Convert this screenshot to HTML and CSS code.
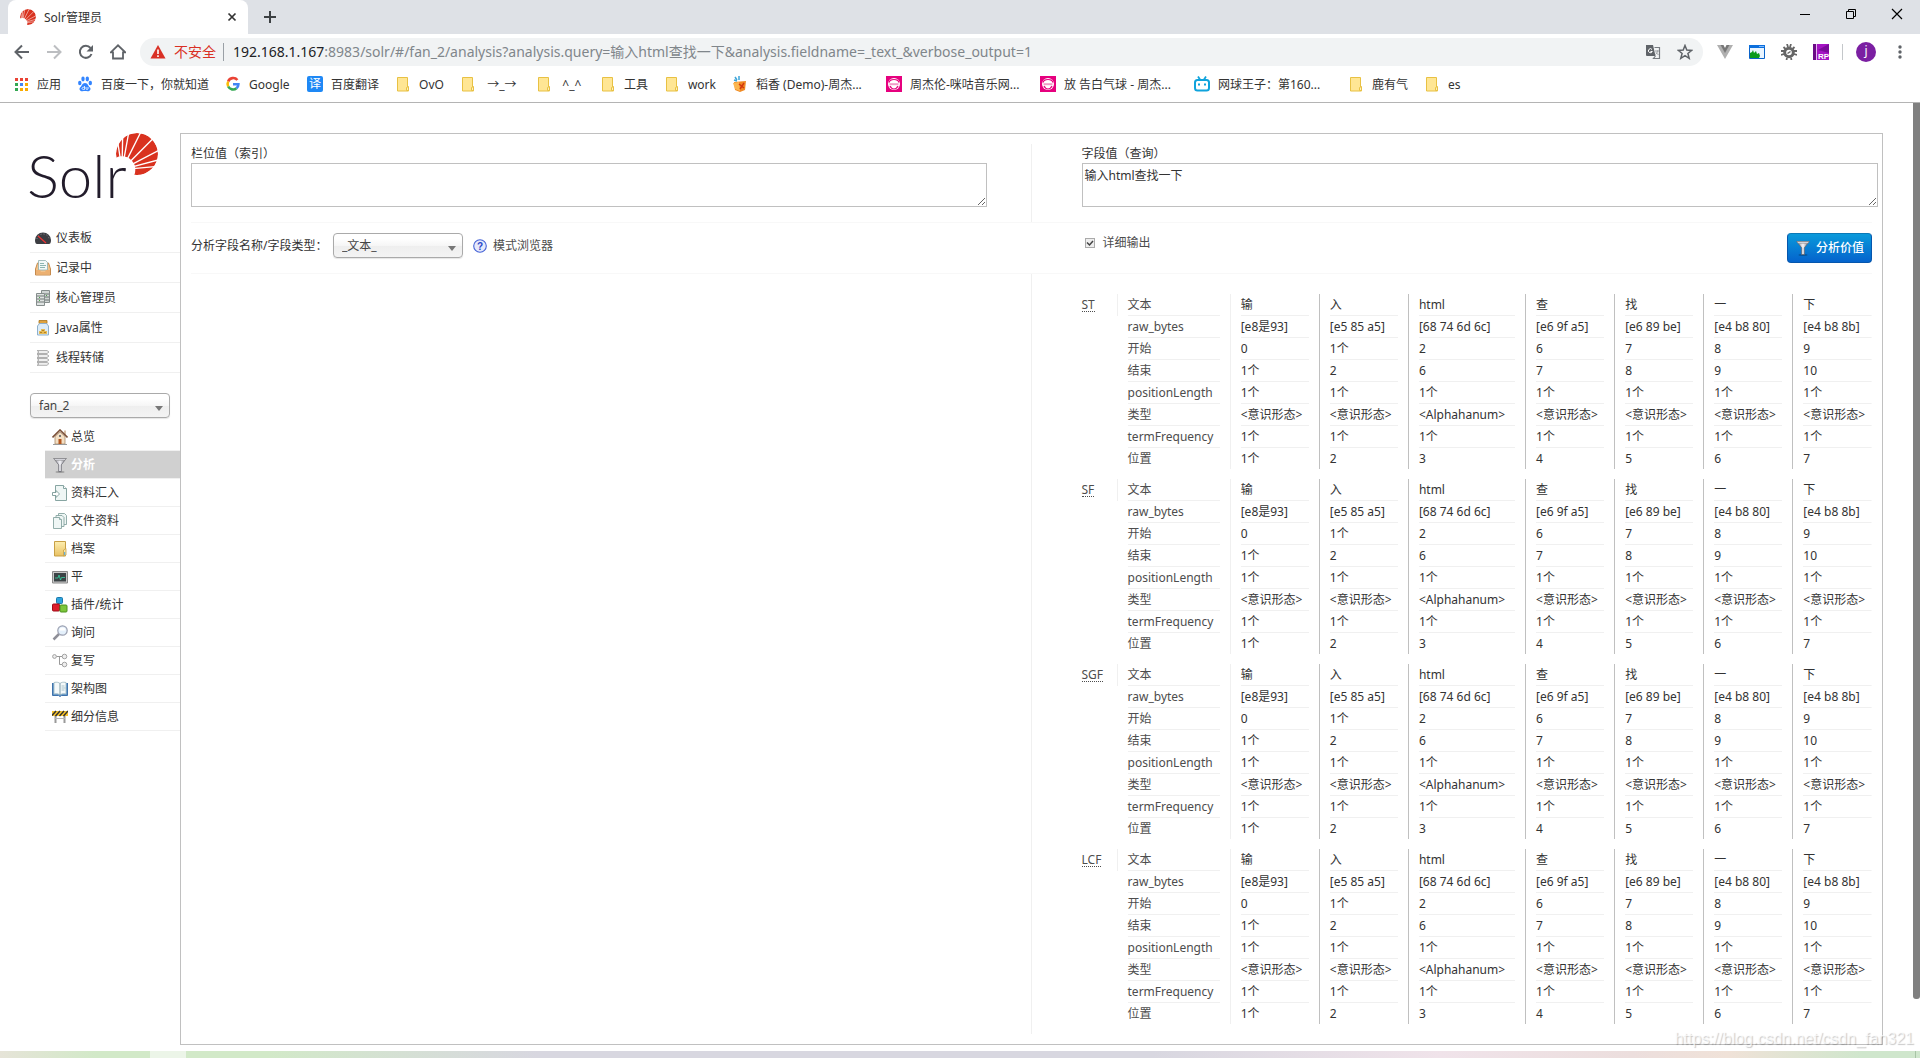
FILE: index.html
```html
<!DOCTYPE html>
<html lang="zh-CN">
<head>
<meta charset="utf-8">
<title>Solr管理员</title>
<link rel="stylesheet" href="styles.css">
</head>
<body>
<svg class="sprite" aria-hidden="true">
  <defs>
    <linearGradient id="g-folder" x1="0" y1="0" x2="0" y2="1"><stop offset="0" stop-color="#fdeeb0"/><stop offset="1" stop-color="#e9c163"/></linearGradient>
    <linearGradient id="g-metal"><stop offset="0" stop-color="#8a8a94"/><stop offset=".5" stop-color="#f4f4f8"/><stop offset="1" stop-color="#777780"/></linearGradient>
    <mask id="sun-mask">
      <circle cx="63" cy="63" r="63" fill="#fff"/>
      <circle cx="18" cy="110" r="40" fill="#000"/>
      <path d="M18 110L4 20M18 110L20 8M18 110L38 0M18 110L75 -4M18 110L112 16M18 110L128 52M18 110L130 80M18 110L125 100" stroke="#000" stroke-width="4"/>
    </mask>
    <symbol id="i-sun" viewBox="0 0 126 126"><circle cx="63" cy="63" r="63" fill="#d9321f" mask="url(#sun-mask)"/></symbol>
    <symbol id="i-bmfolder" viewBox="0 0 16 16"><path d="M2.500 1.500h10v10.500h1v3h-11z" fill="#ffe694" stroke="#e8c143"/><path d="M11.500 14.500v-3l2-1v4z" fill="#fff0b8" stroke="#e8c143"/></symbol>
    <symbol id="i-migu" viewBox="0 0 16 16"><path d="M0 0h16v16H0z" fill="#e6007e"/><circle cx="8" cy="8" r="6" fill="#fff"/><path d="M3 6.500c1-4 9-4 10 0M4 10c2 4 6 4 8 0" fill="none" stroke="#e6007e" stroke-width="1.200"/><path d="M3.500 7.200h9v2h-9z" fill="#f29ac8"/></symbol>
    <symbol id="i-funnel" viewBox="0 0 16 16"><ellipse cx="8" cy="15" rx="4.500" ry=".9" fill="#000" opacity=".25"/><path d="M1.800 1.500h12.400L9.300 7.800v6.700H6.700V7.800z" fill="url(#g-metal)" stroke="#67676f" stroke-width=".8"/><path d="M1.800 1.500h12.400l-1.200 1.800H3z" fill="#dedee6" stroke="#777" stroke-width=".5"/></symbol>
  </defs>
</svg>

<header class="browser">
  <div class="tabs">
    <div class="tab">
      <svg class="i16" viewBox="0 0 16 16"><use href="#i-sun"/></svg>
      <span class="tab-title">Solr管理员</span>
      <button class="bare" aria-label="关闭标签页"><svg class="i16" viewBox="0 0 16 16"><path d="M4.500 4.500l7 7M11.500 4.500l-7 7" stroke="#333" stroke-width="1.700"/></svg></button>
    </div>
    <button class="bare newtab" aria-label="新标签页"><svg class="i16" viewBox="0 0 16 16"><path d="M8 2v12M2 8h12" stroke="#3c4043" stroke-width="2"/></svg></button>
    <div class="window-buttons">
      <button class="bare" aria-label="最小化"><svg class="i16" viewBox="0 0 16 16"><path d="M3 8.500h10" stroke="#000"/></svg></button>
      <button class="bare" aria-label="还原"><svg class="i16" viewBox="0 0 16 16"><path d="M3.500 5.500h7v7h-7zM5.500 5.500v-2h7v7h-2" fill="none" stroke="#000"/></svg></button>
      <button class="bare" aria-label="关闭"><svg class="i16" viewBox="0 0 16 16"><path d="M3 3l10 10M13 3L3 13" stroke="#000" stroke-width="1.200"/></svg></button>
    </div>
  </div>
  <div class="toolbar">
    <div class="nav-buttons">
      <button class="bare" aria-label="后退"><svg class="i16" viewBox="0 0 16 16"><path d="M15 8H2M8 1.500L1.500 8 8 14.500" fill="none" stroke="#5f6368" stroke-width="2"/></svg></button>
      <button class="bare" aria-label="前进"><svg class="i16" viewBox="0 0 16 16"><path d="M1 8h13M8 1.500L14.500 8 8 14.500" fill="none" stroke="#bcbec1" stroke-width="2"/></svg></button>
      <button class="bare" aria-label="重新加载"><svg class="i16" viewBox="0 0 16 16"><path d="M13.500 10A6 6 0 1 1 12.500 4" fill="none" stroke="#5f6368" stroke-width="2"/><path d="M15 1v6.500H8.500z" fill="#5f6368"/></svg></button>
      <button class="bare" aria-label="主页"><svg class="i16" viewBox="0 0 16 16"><path d="M0.800 8.300L8 1.300l7.200 7H13v6.200H3V8.300z" fill="none" stroke="#5f6368" stroke-width="1.800"/></svg></button>
    </div>
    <div class="omnibox">
      <svg class="i16" viewBox="0 0 16 16"><path d="M8 1l7.500 13.500H.5z" fill="#d93025"/><path d="M8 5.500v4.500M8 11.300v1.700" stroke="#fff" stroke-width="1.600"/></svg>
      <span class="insecure">不安全</span>
      <span class="url"><b>192.168.1.167</b>:8983/solr/#/fan_2/analysis?analysis.query=输入html查找一下&amp;analysis.fieldname=_text_&amp;verbose_output=1</span>
      <svg class="i16" viewBox="0 0 16 16"><path d="M1 1h7l2.500 11H2a1 1 0 0 1-1-1z" fill="#5f6368"/><path d="M9.500 3.500h5v11h-6l2-2.500" fill="none" stroke="#777b80" stroke-width="1.200"/><path d="M10 7h4M12.500 6.500c0 2-1 3-2 4M11 8.500l2.500 2.500" fill="none" stroke="#9a9da1"/><path d="M7 5.500a2 2 0 1 0 .3 2H5.500" fill="none" stroke="#fff"/></svg>
      <svg class="i16" viewBox="0 0 16 16"><path d="M8 1.500l1.800 4.600 4.900.3-3.800 3.100 1.300 4.800L8 11.600l-4.200 2.700 1.300-4.800L1.300 6.400l4.900-.3z" fill="none" stroke="#5f6368" stroke-width="1.500"/></svg>
    </div>
    <div class="extensions">
      <svg class="i16" viewBox="0 0 16 16"><path d="M0 1h4l4 7 4-7h4L8 15z" fill="#b0b0b0"/><path d="M3.500 1H6.500L8 4l1.500-3h3L8 9z" fill="#777"/></svg>
      <svg class="i16" viewBox="0 0 16 16"><path d="M.5 1.500h15v13H.5z" fill="#eaf5ff" stroke="#0a63c8"/><path d="M0 1h16v3H0z" fill="#0c6fdc"/><path d="M10 2h5v1h-5z" fill="#7cb8ff"/><path d="M1 14V9l2-1 1-2 1 3 2-2 1 3 2-1 1 3-1 2z" fill="#0a9a1c"/></svg>
      <svg class="i16" viewBox="0 0 16 16"><circle cx="8" cy="8.500" r="4.300" fill="none" stroke="#666" stroke-width="3"/><path d="M6 0l1 3M10 0L9 3M6 14l-.5 2M10 14l.5 2M0 7h3M0 11l3-1M13 7h3M13 10l3 1M2.500 3l2 2M13.500 3l-2 2" stroke="#666" stroke-width="1.800"/><path d="M6.500 9.500l3-2" stroke="#666" stroke-width="1.500"/></svg>
      <svg class="i16" viewBox="0 0 16 16"><path d="M0 0h16v16H0z" fill="#a514c4"/><path d="M0 0h3v16H0z" fill="#6b0c86"/><path d="M3 0h1v16H3z" fill="#e7b8f2"/><path d="M5 6l11-6v9z" fill="#7c0a9b"/><text x="5" y="15" class="rp">RP</text></svg>
      <i class="sep"></i>
      <span class="avatar">j</span>
      <svg class="i16" viewBox="0 0 16 16"><circle cx="8" cy="3" r="1.700" fill="#5f6368"/><circle cx="8" cy="8" r="1.700" fill="#5f6368"/><circle cx="8" cy="13" r="1.700" fill="#5f6368"/></svg>
    </div>
  </div>
  <nav class="bookmarks" aria-label="书签">
    <a href="#"><svg class="i16" viewBox="0 0 16 16"><path d="M2 2h3v3H2zM7 2h3v3H7z" fill="#ea4335"/><path d="M12 2h3v3h-3z" fill="#ea4335"/><path d="M2 7h3v3H2z" fill="#34a853"/><path d="M7 7h3v3H7z" fill="#4285f4"/><path d="M12 7h3v3h-3zM7 12h3v3H7zM12 12h3v3h-3z" fill="#f9ab00"/><path d="M2 12h3v3H2z" fill="#34a853"/></svg><span>应用</span></a>
    <a href="#"><svg class="i16" viewBox="0 0 16 16"><g fill="#3385ff"><ellipse cx="2.800" cy="7" rx="1.700" ry="2.200"/><ellipse cx="6" cy="3" rx="1.700" ry="2.400"/><ellipse cx="10.300" cy="3" rx="1.700" ry="2.400"/><ellipse cx="13.300" cy="7" rx="1.700" ry="2.200"/><path d="M8 7c3 0 3 3 5 4.500 1.500 2-.5 4-2.500 3.700-1.700-.3-3.300-.3-5 0-2 .3-4-1.700-2.500-3.700C5 10 5 7 8 7z"/></g><path d="M7.500 10v3.500h-1c-2 0-2-2.200 0-2.200h1M9 11v2c0 .5 2 .5 2 0v-2" fill="none" stroke="#fff" stroke-width=".8"/></svg><span>百度一下，你就知道</span></a>
    <a href="#"><svg class="i16" viewBox="0 0 16 16"><g fill="none" stroke-width="2.600"><path d="M12.400 4A5.400 5.400 0 0 0 3.200 5.500" stroke="#ea4335"/><path d="M3.200 5.500a5.400 5.400 0 0 0 0 5" stroke="#fbbc05"/><path d="M3.200 10.500a5.400 5.400 0 0 0 8.300 1.700" stroke="#34a853"/><path d="M11.500 12.200c1.300-1.100 1.900-2.500 1.900-4H8" stroke="#4285f4"/></g></svg><span class="google">Google</span></a>
    <a href="#"><i class="yi">译</i><span>百度翻译</span></a>
    <a href="#"><svg class="i16"><use href="#i-bmfolder"/></svg><span>OvO</span></a>
    <a href="#"><svg class="i16"><use href="#i-bmfolder"/></svg><span class="arrows">→_→</span></a>
    <a href="#"><svg class="i16"><use href="#i-bmfolder"/></svg><span class="face">^_^</span></a>
    <a href="#"><svg class="i16"><use href="#i-bmfolder"/></svg><span>工具</span></a>
    <a href="#"><svg class="i16"><use href="#i-bmfolder"/></svg><span>work</span></a>
    <a href="#"><svg class="i16" viewBox="0 0 16 16"><path d="M2 6l12-1-1 9-5 2-5-2z" fill="#f08a24"/><path d="M1 7l6-1 1 9-5-2z" fill="#fbb651"/><path d="M7 8l5 4M12 7l-4 6" stroke="#d4380d" stroke-width="1.500"/><path d="M3 1l2 3M7 0v4M2 4l3 1" stroke="#3da5d9" stroke-width="1.500"/></svg><span class="long">稻香 (Demo)-周杰...</span></a>
    <a href="#"><svg class="i16"><use href="#i-migu"/></svg><span class="long">周杰伦-咪咕音乐网...</span></a>
    <a href="#"><svg class="i16"><use href="#i-migu"/></svg><span class="long">放 告白气球 - 周杰...</span></a>
    <a href="#"><svg class="i16" viewBox="0 0 16 16"><path d="M4 .5L6 3.500M12 .5l-2 3" stroke="#0fa3dc" stroke-width="1.800"/><rect x="1" y="4" width="14" height="10.500" rx="2.500" fill="none" stroke="#0fa3dc" stroke-width="2"/><path d="M5 7.500v2M11 7.500v2" stroke="#0fa3dc" stroke-width="2"/></svg><span class="long">网球王子：第160...</span></a>
    <a href="#"><svg class="i16"><use href="#i-bmfolder"/></svg><span>鹿有气</span></a>
    <a href="#"><svg class="i16"><use href="#i-bmfolder"/></svg><span>es</span></a>
  </nav>
</header>

<div class="page">
  <aside class="sidebar">
    <a class="logo" href="#" aria-label="Solr"><span>Solr</span><svg class="sun" viewBox="0 0 126 126"><use href="#i-sun"/></svg></a>
    <nav class="menu" aria-label="主菜单">
      <a href="#"><svg class="i16" viewBox="0 0 16 16"><path d="M0 10a8 7.500 0 0 1 16 0c0 3-1 4-2 4H2c-1 0-2-1-2-4z" fill="#3c3d42"/><path d="M2 9a6 5 0 0 1 12 0" fill="none" stroke="#8c8d92" stroke-dasharray="1 2"/><path d="M3 6l8 7" stroke="#e33" stroke-width="1.200"/></svg>仪表板</a>
      <a href="#"><svg class="i16" viewBox="0 0 16 16"><path d="M2.500 3L0.500 9v6h15V9l-2-6z" fill="#f3c48c" stroke="#c68a4c"/><path d="M3.500.5h7l2 2V10h-9z" fill="#f2f8f8" stroke="#8fb0b0" stroke-width=".8"/><path d="M5 3.500h4M5 5.500h6M5 7.500h5" stroke="#8bb5b0"/><path d="M1 10h4l1 2h4l1-2h4v4.500H1z" fill="#ecb071"/></svg>记录中</a>
      <a href="#"><svg class="i16" viewBox="0 0 16 16"><path d="M6.500.5h8v12h-8z" fill="#d0d5d4" stroke="#858d8c"/><path d="M1.500 3.500h8v12h-8z" fill="#dfe3e2" stroke="#858d8c"/><path d="M2 6h7M2 9h7M2 12h7M10 4h4M10 7h4M10 10h4" stroke="#6e7675"/><path d="M4 7.500h1M4 10.500h1M11 5.500h1" stroke="#4aa54a"/></svg>核心管理员</a>
      <a href="#"><svg class="i16" viewBox="0 0 16 16"><path d="M4 .5h8v3H4z" fill="#e0a33e" stroke="#a8731d" stroke-width=".8"/><path d="M4.500 3.500h7l2 2.500v9h-11V6z" fill="#dcecf8" stroke="#8eb0cc"/><path d="M4 14v-3h2V9h4v2h2v3z" fill="#e7bb55"/><path d="M5 12.500h2M9 12.500h2M7 10.500h2" stroke="#b58325"/></svg>Java属性</a>
      <a href="#"><svg class="i16" viewBox="0 0 16 16"><g fill="#efefef" stroke="#a8a8a8" stroke-width=".9"><path d="M2 .5h10l2 1.500-2 1.500H2L4 2z"/><path d="M2 4.500h10L14 6l-2 1.500H2L4 6z"/><path d="M2 8.500h10l2 1.500-2 1.500H2L4 10z"/><path d="M2 12.500h10l2 1-2 1.800H2l2-1.300z"/></g></svg>线程转储</a>
    </nav>
    <select class="chosen" aria-label="核心选择"><option>fan_2</option></select>
    <nav class="submenu" aria-label="核心菜单">
      <a href="#"><svg class="i16" viewBox="0 0 16 16"><path d="M3 7.500L8 3l5 4.500V15H3z" fill="#f3dfc4" stroke="#a98a6a" stroke-width=".8"/><path d="M12 1.500h2V6l-2-1.500z" fill="#d8c0a8"/><path d="M.5 8.500L8 1l7.500 7.500" fill="none" stroke="#7b5038" stroke-width="1.600"/><path d="M6.500 10h3v5h-3z" fill="#b5561e"/><path d="M7 6h2v2H7z" fill="#777"/><path d="M1 15.500h14" stroke="#9a9a9a"/></svg>总览</a>
      <a href="#" class="active"><svg class="i16"><use href="#i-funnel"/></svg>分析</a>
      <a href="#"><svg class="i16" viewBox="0 0 16 16"><path d="M3.500.5h8l3 3v12h-11z" fill="#eff6f5" stroke="#87a5a2"/><path d="M11.500.5v3h3" fill="#fff" stroke="#87a5a2"/><path d="M.5 7.500h3.500V5.500L7.500 9 4 12.500v-2H.5z" fill="#fff" stroke="#7b9a97" stroke-width=".9"/></svg>资料汇入</a>
      <a href="#"><svg class="i16" viewBox="0 0 16 16"><g fill="#eff6f5" stroke="#87a5a2" stroke-width=".9"><path d="M6.500.5h6l2 2v9h-8z"/><path d="M4 2.500h6l2 2v9H4z"/><path d="M1.500 4.500h6l2 2v9h-8z"/><path d="M7.500 4.500v2h2"/></g></svg>文件资料</a>
      <a href="#"><svg class="i16" viewBox="0 0 16 16"><path d="M2.500.5h11v14.500h-11z" fill="url(#g-folder)" stroke="#c79f45"/><path d="M11.500 15V9l2.500-1.500V14z" fill="#f9e6a5" stroke="#c79f45" stroke-width=".8"/><path d="M12.700 11v3" stroke="#4aa3e0"/></svg>档案</a>
      <a href="#"><svg class="i16" viewBox="0 0 16 16"><path d="M.5 2.500h15v11.500H.5z" fill="#c9c9c9" stroke="#8a8a8a"/><path d="M2 4h12v8.500H2z" fill="#3c4346"/><path d="M3 9h3l1-3 1.500 5 1-2.500H13" fill="none" stroke="#35d0a0" stroke-width=".8"/></svg>平</a>
      <a href="#"><svg class="i16" viewBox="0 0 16 16"><rect x="4.500" y=".5" width="6" height="6" rx="1" fill="#2fa3dc" stroke="#1b78ab"/><rect x=".5" y="7" width="7" height="7" rx="1" fill="#dc1d2c" stroke="#9e0f1b"/><rect x="8" y="8" width="7" height="7" rx="1" fill="#7cc63a" stroke="#4d9220"/></svg>插件/统计</a>
      <a href="#"><svg class="i16" viewBox="0 0 16 16"><path d="M1.500 14.500L7 9" stroke="#8f8f98" stroke-width="2.500"/><circle cx="10.500" cy="5.500" r="4.700" fill="#e4f0fb" stroke="#9a9fb0" stroke-width="1.200"/><path d="M7.500 5.500a3 3 0 0 1 6 0z" fill="#fff"/></svg>询问</a>
      <a href="#"><svg class="i16" viewBox="0 0 16 16"><path d="M4.500 3.500h6M7.500 3.500v8h3" fill="none" stroke="#999"/><g fill="#eee" stroke="#999" stroke-width=".9"><circle cx="2.500" cy="3.500" r="1.900"/><circle cx="12.500" cy="3.500" r="2.300"/><circle cx="12.500" cy="11.500" r="2.300"/></g></svg>复写</a>
      <a href="#"><svg class="i16" viewBox="0 0 16 16"><path d="M.5 2v12.500h6l1.500 1 1.500-1h6V2" fill="#5f93c9" stroke="#3f73ac"/><path d="M2 1.500c3-.8 5 0 6 1 1-1 3-1.800 6-1V13c-3-.5-5 0-6 1-1-1-3-1.500-6-1z" fill="#f4f9fa" stroke="#9db7c0" stroke-width=".8"/><path d="M8 2.500V14" stroke="#7d9aa5"/><path d="M9.500 5h3M9.500 7h4M9.500 9h3" stroke="#a9c3cb"/></svg>架构图</a>
      <a href="#"><svg class="i16" viewBox="0 0 16 16"><path d="M3.500 6v8M12.500 6v8" stroke="#9a9a9a" stroke-width="2"/><path d="M3 9.500h10" stroke="#b5b5b5"/><path d="M0 2h16v5H0z" fill="#f8c42c"/><path d="M0 6.500L4 2M3.500 7L8 2M7.500 7L12 2M11.500 7L16 2" stroke="#333" stroke-width="1.500"/></svg>细分信息</a>
    </nav>
  </aside>

  <main class="frame">
    <form class="analysis">
      <div class="half index">
        <label for="index-value">栏位值（索引）</label>
        <textarea id="index-value"></textarea>
      </div>
      <div class="half query">
        <label for="query-value">字段值（查询）</label>
        <textarea id="query-value">输入html查找一下</textarea>
      </div>
      <div class="options">
        <div class="field">
          <label for="field-type">分析字段名称/字段类型：</label>
          <select class="chosen" id="field-type"><option>_文本_</option></select>
          <a class="schema" href="#"><svg class="i14" viewBox="0 0 14 14"><circle cx="7" cy="7" r="6.300" fill="#e6e9fb" stroke="#4563d6" stroke-width="1.100"/><text x="7" y="11" class="qmark">?</text></svg>模式浏览器</a>
        </div>
        <div class="verbose">
          <label><input type="checkbox" checked>详细输出</label>
          <button type="submit" class="analyse"><svg class="i16"><use href="#i-funnel"/></svg>分析价值</button>
        </div>
      </div>
    </form>
    <div class="results">
      <div class="half index"></div>
      <div class="half query" id="result"></div>
    </div>
  </main>
  <div class="scrollbar"><i></i></div>
</div>

<footer class="taskbar">
  <i class="tip black"></i><i class="tip black"></i><i class="tip grey"></i><i class="tip blue"></i><i class="current"></i><i class="tip cyan"></i><i class="tip red"></i><i class="tip blue"></i>
  <span class="tray"><i class="tip black"></i><i class="tip red"></i><i class="tip gap"></i><i class="tip black"></i><i class="tip gap"></i><i class="tip black"></i></span>
</footer>
<div class="watermark">https://blog.csdn.net/csdn_fan321</div>
<script src="app.js"></script>
</body>
</html>
```
FILE: app.js
```js
// Analysis stages and the attributes of every token they emit.
const stages = ['ST', 'SF', 'SGF', 'LCF'];
const rows = [
  ['文本', '输', '入', 'html', '查', '找', '一', '下'],
  ['raw_bytes', '[e8是93]', '[e5 85 a5]', '[68 74 6d 6c]', '[e6 9f a5]', '[e6 89 be]', '[e4 b8 80]', '[e4 b8 8b]'],
  ['开始', '0', '1个', '2', '6', '7', '8', '9'],
  ['结束', '1个', '2', '6', '7', '8', '9', '10'],
  ['positionLength', '1个', '1个', '1个', '1个', '1个', '1个', '1个'],
  ['类型', '<意识形态>', '<意识形态>', '<Alphahanum>', '<意识形态>', '<意识形态>', '<意识形态>', '<意识形态>'],
  ['termFrequency', '1个', '1个', '1个', '1个', '1个', '1个', '1个'],
  ['位置', '1个', '2', '3', '4', '5', '6', '7']
];

function add(parent, tag, text) {
  const node = document.createElement(tag);
  if (text !== undefined) node.textContent = text;
  parent.appendChild(node);
  return node;
}

const result = document.getElementById('result');
for (const stage of stages) {
  const table = add(result, 'table');
  table.className = 'stage';
  const body = add(table, 'tbody');
  rows.forEach((cells, index) => {
    const tr = add(body, 'tr');
    const head = add(tr, 'td');
    head.className = 'name';
    if (index === 0) add(head, 'abbr', stage);
    cells.forEach((cell, column) => {
      const node = add(tr, column === 0 ? 'th' : 'td', cell);
      if (column === 3) node.className = 'wide';
    });
  });
}
```
FILE: styles.css
```css
* { box-sizing: border-box; }
body {
  margin: 0;
  min-height: 100vh;
  display: flex;
  flex-direction: column;
  background: #fff;
  color: #333;
  font: 12px/18px "Noto Sans", "Noto Sans CJK SC", sans-serif;
}
a { color: inherit; text-decoration: none; }
button, select, textarea, input { font: inherit; color: inherit; margin: 0; }
.sprite { position: absolute; width: 0; height: 0; }
.i16 { width: 16px; height: 16px; flex: none; display: block; }
.i14 { width: 14px; height: 14px; flex: none; display: block; }
.bare { border: 0; background: none; padding: 0; }

/* browser window */
.browser { border-bottom: 1px solid #b4b4b4; }
.tabs { display: flex; height: 34px; background: #dee1e6; padding-left: 8px; }
.tab {
  display: flex; align-items: center; width: 240px; height: 34px;
  padding: 0 8px 0 12px; gap: 8px; background: #fff; border-radius: 8px 8px 0 0;
}
.tab-title { flex: 1; padding-top: 2px; }
.newtab { margin-left: 14px; }
.window-buttons { display: flex; gap: 30px; margin-left: auto; padding-right: 15px; height: 28px; }
.toolbar { display: flex; align-items: center; height: 32px; padding: 4px 12px 0 14px; }
.nav-buttons { display: flex; gap: 16px; margin-right: 14px; }
.omnibox {
  flex: 1; display: flex; align-items: center; height: 28px; min-width: 0;
  padding: 0 10px; gap: 16px; border-radius: 14px; background: #f1f3f4;
}
.insecure {
  margin-left: -8px; color: #d93025; font-size: 14px; padding-right: 7px;
  border-right: 1px solid #9aa0a6;
}
.url { flex: 1; margin-left: -7px; font-size: 14px; color: #80868b; white-space: nowrap; }
.url b { font-weight: 400; color: #202124; }
.extensions { display: flex; align-items: center; gap: 16px; margin-left: 14px; }
.sep { width: 1px; height: 16px; background: #c4c7ca; margin: 0 -3px; }
.avatar { width: 20px; height: 20px; border-radius: 50%; background: #7b1fa2; color: #fff; text-align: center; line-height: 18px; }
.rp { font: bold 8px "Liberation Sans", sans-serif; fill: #fff; }
.bookmarks { display: flex; align-items: center; gap: 16px; height: 36px; padding-left: 13px; white-space: nowrap; }
.bookmarks a { display: flex; align-items: center; gap: 8px; }
.bookmarks span { padding-top: 2px; }
.google { width: 42px; }
.arrows { width: 36px; text-align: center; }
.face { width: 24px; text-align: center; }
.long { width: 114px; overflow: hidden; }
.yi { width: 16px; height: 16px; border-radius: 2px; background: #1e88f5; color: #fff; font-style: normal; text-align: center; line-height: 16px; }

/* admin page */
.page { flex: 1; display: flex; padding-left: 30px; }
.sidebar { width: 150px; flex: none; padding-top: 30px; }
.logo { display: flex; height: 64px; margin: 0 0 26px -3px; }
.logo span { width: 89px; white-space: nowrap; font: 300 60px/84px Lato, sans-serif; color: #221c2b; }
.sun { width: 42px; height: 42px; flex: none; }
.menu a, .submenu a { display: flex; align-items: center; border-bottom: 1px solid #f0f0f0; }
.menu a { height: 30px; padding-left: 5px; gap: 5px; }
.chosen {
  appearance: none; height: 25px; padding: 0 24px 0 8px; border: 1px solid #aaa; border-radius: 4px;
  background:
    url("data:image/svg+xml,%3Csvg xmlns='http://www.w3.org/2000/svg' width='8' height='5'%3E%3Cpath d='M0 0h8L4 5z' fill='%23777'/%3E%3C/svg%3E") no-repeat right 6px top 12px,
    linear-gradient(#fff 20%, #f6f6f6 50%, #eee 52%, #f4f4f4);
  box-shadow: 0 1px 1px rgba(0, 0, 0, .1);
  color: #444;
}
.sidebar .chosen { width: 140px; margin: 20px 0 5px; display: block; }
.submenu { margin-left: 15px; }
.submenu a { height: 28px; padding-left: 7px; gap: 3px; }
.submenu .active { background: #d0d0d0; color: #fff; font-weight: 700; }

.frame { flex: 1; min-width: 0; margin: 30px 30px 6px 0; border: 1px solid #c0c0c0; padding: 10px; }
.analysis, .results { display: grid; grid-template-columns: 1fr 1fr; }
.half.index { border-right: 1px solid #f0f0f0; padding-right: 50px; }
.half.query { padding-left: 50px; }
.analysis .half { height: 78px; }
.analysis .half label { display: block; height: 19px; line-height: 20px; }
textarea {
  display: block; width: calc(100% + 6px); height: 44px; padding: 4px 2px;
  border: 1px solid #c0c0c0; line-height: 16px; resize: vertical;
}
.options {
  grid-column: 1 / 3; display: grid; grid-template-columns: 1fr 1fr;
  border: solid #f8f8f8; border-width: 1px 0; height: 52px; padding-top: 10px;
}
.field, .schema { display: flex; align-items: center; height: 25px; }
#field-type { width: 130px; margin: 0 10px 0 4px; }
.field label { width: 138px; white-space: nowrap; }
.schema { gap: 6px; color: #4d4d4d; }
.qmark { font: bold 10px "Liberation Sans", sans-serif; fill: #2845c8; text-anchor: middle; }
.verbose { display: flex; justify-content: space-between; align-items: flex-start; padding-left: 50px; }
.verbose label { display: flex; align-items: center; gap: 8px; height: 20px; padding-left: 3px; color: #4d4d4d; }
.verbose input { appearance: none; width: 10px; height: 10px; border: 1px solid #aaa; background: #eee url("data:image/svg+xml,%3Csvg xmlns='http://www.w3.org/2000/svg' width='8' height='8'%3E%3Cpath d='M1 3.500l2.500 2.500L7 2' fill='none' stroke='%23444' stroke-width='1.500'/%3E%3C/svg%3E") center no-repeat; }
.analyse {
  display: flex; align-items: center; gap: 5px; width: 85px; height: 30px; padding: 0 0 0 7px;
  border: 1px solid #0556ad; border-top-color: #0a79b8; border-radius: 4px; color: #fff; font-weight: 500;
  background: linear-gradient(#0a9adb, #0463cd); white-space: nowrap;
}

.results .half { min-width: 0; padding-top: 20px; }
.stage { border-collapse: separate; border-spacing: 0; table-layout: fixed; width: 790px; margin-bottom: 10px; line-height: 18px; }
.stage td, .stage th {
  height: 22px; width: 89px; padding: 0 10px; border-left: 1px solid #c0c0c0; white-space: nowrap;
  font-weight: 400; text-align: left;
  background: linear-gradient(#f0f0f0, #f0f0f0) bottom / 100% 1px no-repeat content-box;
}
.stage tr:last-child > * { height: 21px; background: none; }
.stage .name { width: 35px; padding: 0; border: 0; background: none; color: #4d4d4d; }
.stage th { width: 113px; color: #4d4d4d; border-color: transparent; }
.stage tr:first-child th { border-color: #f0f0f0; }
.stage th + td { border-color: #f0f0f0; }
.stage .wide { width: 117px; }
.stage td:last-child { width: 79px; padding-right: 0; }
abbr { display: inline-block; border-bottom: 1px dotted #4d4d4d; line-height: 13px; }

.scrollbar { width: 7px; flex: none; background: #fff; }
.scrollbar i { display: block; height: 94.5%; background: #808080; border-radius: 0 0 3px 3px; }

/* desktop edge */
.taskbar {
  display: flex; align-items: flex-end; height: 8px; gap: 24px; padding-left: 18px;
  background: linear-gradient(90deg, #e6e4d8, #d2e9c8 5%, #d2e9c8 14%, #d8d7e0 28%, #d8d7e0 60%, #f0e3ea 75%, #ecdedd 85%, #f0e2d8 90%, #cfe6cc 97%);
}
.tip { width: 12px; height: 1px; }
.black { background: #111; }
.grey { background: #888878; }
.blue { background: #1c78c0; }
.cyan { background: #46bfe8; }
.red { background: #c8102e; }
.current { width: 36px; height: 8px; background: #ecf5e8; margin: 0 -12px; }
.tray { display: flex; align-items: flex-end; gap: 24px; height: 8px; margin: 0 4px 0 auto; padding-right: 20px; border-right: 1px solid #a8c4a6; }
.watermark {
  position: absolute; right: 6px; bottom: 9px; font: 16px/20px "Liberation Sans", sans-serif;
  color: rgba(255, 255, 255, .7); text-shadow: 1px 1px 1px rgba(0, 0, 0, .22);
}
```
